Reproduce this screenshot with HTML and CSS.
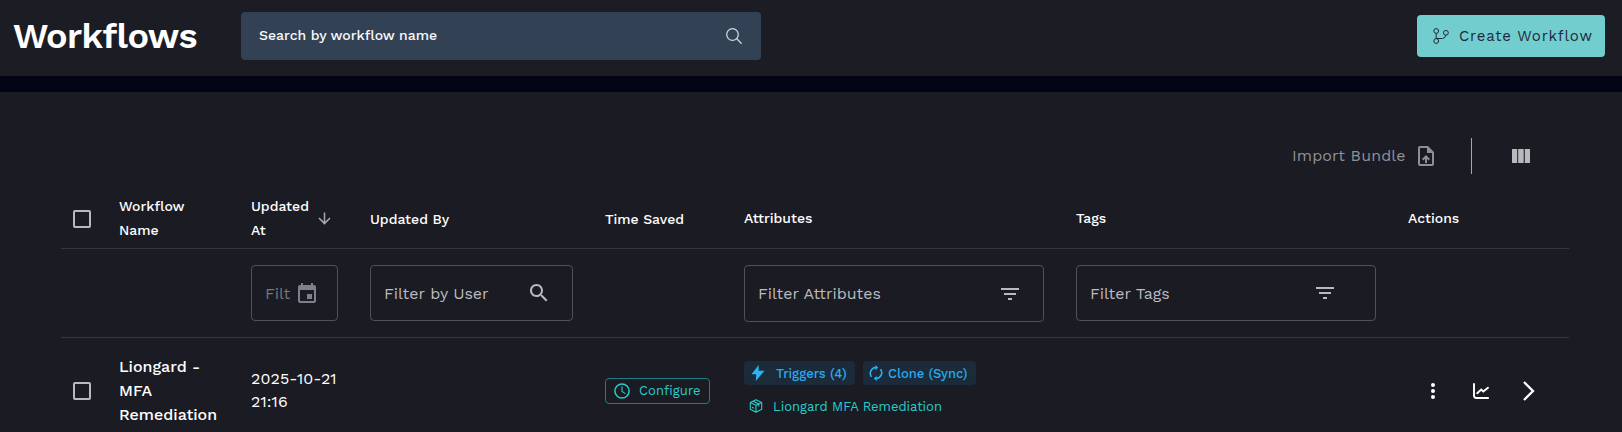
FILE: index.html
```
<!DOCTYPE html>
<html lang="en">
<head>
<meta charset="utf-8">
<title>Workflows</title>
<link rel="stylesheet" href="styles.css">
</head>
<body>
<header class="topbar">
  <h1 class="title">Workflows</h1>
  <div class="search">
    <span class="search-text">Search by workflow name</span>
    <svg class="search-icon" width="16" height="16" viewBox="0 0 16 16" fill="none" stroke="#cbd5e1" stroke-width="1.3" stroke-linecap="round"><circle cx="6.5" cy="6.5" r="5.8"/><path d="M10.8 10.8 15.2 15.2"/></svg>
  </div>
  <button class="create">
    <svg width="16" height="16" viewBox="0 0 16 16" fill="none" stroke="#1e293b" stroke-width="1"><circle cx="3.2" cy="3" r="2.4"/><circle cx="3.2" cy="13" r="2.4"/><circle cx="12.9" cy="4.8" r="2.4"/><path d="M3.2 5.4v5.2M3.2 10.5H9.5Q12.2 10.3 12.8 7.2"/></svg>
    <span class="create-text">Create Workflow</span>
  </button>
</header>
<main class="panel">
  <div class="toolbar">
    <div class="import"><span class="import-text">Import Bundle</span>
      <svg width="16" height="20" viewBox="0 0 16 20" fill="#8f8f95"><path fill-rule="evenodd" d="M2 0H10L16 6V18a2 2 0 0 1-2 2H2a2 2 0 0 1-2-2V2A2 2 0 0 1 2 0ZM2 2V18H14V7H9V2ZM4 13.01 5.41 14.42 7 12.84V17H9V12.84L10.59 14.43 12 13.01 8.01 9Z"/></svg>
    </div>
    <div class="divider"></div>
    <svg class="columns" width="18" height="14" viewBox="0 0 18 14" fill="#bababd"><path d="M0 0h5.2v14H0zM6.2 0h5.5v14H6.2zM12.8 0H18v14h-5.2z"/></svg>
  </div>
  <div class="table">
    <div class="row head">
      <div class="cell check"><span class="box"></span></div>
      <div class="cell"><span>Workflow<br>Name</span></div>
      <div class="cell sorted"><span>Updated<br>At</span>
        <svg width="13" height="13" viewBox="0 0 13 13" fill="none" stroke="#a9a9ad" stroke-width="1.5"><path d="M6.5 0.5V11.5M1 6 6.5 11.6 12 6"/></svg></div>
      <div class="cell low"><span>Updated By</span></div>
      <div class="cell low"><span>Time Saved</span></div>
      <div class="cell"><span>Attributes</span></div>
      <div class="cell"><span>Tags</span></div>
      <div class="cell"><span>Actions</span></div>
    </div>
    <div class="row filters">
      <div></div><div></div>
      <div class="field date"><span>Filt</span>
        <svg width="18" height="20" viewBox="0 0 18 20" fill="#7d808d"><path fill-rule="evenodd" d="M14 11H9v5h5ZM13 0V2H5V0H3V2H2A2 2 0 0 0 0 4V18a2 2 0 0 0 2 2H16a2 2 0 0 0 2-2V4a2 2 0 0 0-2-2H15V0ZM16 18H2V7H16Z"/></svg></div>
      <div class="field user"><span>Filter by User</span>
        <svg width="18" height="18" viewBox="3 3 18 18" fill="#bababd"><path d="M15.5 14h-.79l-.28-.27C15.41 12.59 16 11.11 16 9.5 16 5.91 13.09 3 9.5 3S3 5.91 3 9.5 5.91 16 9.5 16c1.61 0 3.09-.59 4.23-1.57l.27.28v.79l5 4.99L20.49 19zm-6 0C7.01 14 5 11.99 5 9.5S7.01 5 9.5 5 14 7.01 14 9.5 11.99 14 9.5 14"/></svg></div>
      <div></div>
      <div class="field attrs"><span>Filter Attributes</span>
        <svg width="18" height="12" viewBox="0 0 18 12" fill="#bababd"><path d="M7 12h4v-2H7zM0 0v2h18V0zM3 7h12V5H3z"/></svg></div>
      <div class="field tags"><span>Filter Tags</span>
        <svg width="18" height="12" viewBox="0 0 18 12" fill="#bababd"><path d="M7 12h4v-2H7zM0 0v2h18V0zM3 7h12V5H3z"/></svg></div>
      <div></div>
    </div>
    <div class="row body">
      <div class="cell check"><span class="box"></span></div>
      <div class="cell name"><span>Liongard -<br>MFA<br>Remediation</span></div>
      <div class="cell when"><span>2025-10-21<br>21:16</span></div>
      <div></div>
      <div class="cell"><button class="configure">
        <svg width="16" height="16" viewBox="0 0 16 16" fill="none" stroke="#28cccd" stroke-width="1.5"><circle cx="8" cy="8" r="7.1"/><path d="M8 3.5V8.4L11.4 10.6" stroke-width="1.1"/></svg>
        <span>Configure</span></button></div>
      <div class="attributes">
        <div class="chips">
          <span class="chip triggers"><svg width="14" height="16" viewBox="0 0 14 16" fill="#29b6f6"><path d="M7.6 0 .5 9.2H5.2L4.8 16 13.5 5.7H7.6Z"/></svg><span>Triggers (4)</span></span>
          <span class="chip clone"><svg width="14" height="16" viewBox="0 0 14 16" fill="none" stroke="#29b6f6" stroke-width="1.5"><path d="M2.5 11.8A5.7 5.7 0 0 1 6.8 2.6M11.5 4.2A5.7 5.7 0 0 1 7.2 13.4"/><path d="M6.4 0V5.2L9.1 2.6ZM7.6 10.8V16L4.9 13.4Z" fill="#29b6f6" stroke="none"/></svg><span>Clone (Sync)</span></span>
        </div>
        <div class="bundle"><svg width="14" height="14" viewBox="0 0 14 14" fill="none" stroke="#28cccd" stroke-width="1.1" stroke-linejoin="round"><path d="M7 .7 12.7 3.5V10.3L7 13.3 1.3 10.3V3.5ZM1.3 3.5 7 6.2 12.7 3.5M7 6.2V13.3M4 2.2 9.8 5V7.4M3 8.2l1.9 1"/></svg><span>Liongard MFA Remediation</span></div>
      </div>
      <div></div>
      <div class="cell actions">
        <svg width="4" height="16" viewBox="0 0 4 16" fill="#fff"><circle cx="2" cy="2" r="2"/><circle cx="2" cy="8" r="2"/><circle cx="2" cy="14" r="2"/></svg>
        <svg width="16" height="16" viewBox="0 0 16 16" fill="none" stroke="#fff" stroke-width="1.9" stroke-linecap="round"><path d="M1 1V12.5Q1 15 3.5 15H15.2M4.2 10.2 8.2 6.5 10.3 8.5 15 4.8"/></svg>
        <svg width="12" height="20" viewBox="0 0 12 20" fill="none" stroke="#fff" stroke-width="2.3"><path d="M1 1 10 10 1 19"/></svg>
      </div>
    </div>
  </div>
</main>
</body>
</html>
```
FILE: styles.css
```
* { box-sizing: border-box; }
body { margin: 0; height: 432px; overflow: hidden; background: #1b1b24; color: #fff; font-family: "Work Sans", Inter, sans-serif; }
svg { display: block; flex: none; }
button { font-family: inherit; margin: 0; }
span { white-space: nowrap; }

.topbar { display: flex; align-items: flex-start; height: 76px; background: #1c1c24; }
.title { width: 228px; margin: 14px 0 0 13px; font-size: 36px; line-height: 44px; font-weight: 600; letter-spacing: -0.65px; }
.search { display: flex; align-items: center; justify-content: space-between; width: 520px; height: 48px; margin-top: 12px; padding: 0 19px 0 18px; border-radius: 4px; background: #334155; }
.search-text { margin-bottom: 2px; font-size: 14px; font-weight: 500; color: #f8fafc; }
.create { display: flex; align-items: center; gap: 10px; width: 188px; height: 42px; margin: 15px 17px 0 auto; padding: 0 0 0 16px; border: 0; border-radius: 4px; background: #72cdce; color: #1e293b; }
.create-text { font-size: 15px; font-weight: 450; letter-spacing: 0.78px; }

.panel { border-top: 16px solid #000413; }
.toolbar { display: flex; align-items: center; height: 97px; padding: 31px 92px 0 1292px; }
.import { display: flex; align-items: center; justify-content: space-between; width: 142px; color: #8f8f95; }
.import-text { margin-bottom: 2px; font-size: 16px; letter-spacing: 0.12px; }
.divider { width: 1px; height: 36px; margin: 0 40px 0 37px; background: #a3a7b3; }

.table { margin: 0 53px 0 61px; }
.row { display: grid; grid-template-columns: 58px 132px 119px 235px 139px 332px 332px 161px; }
.cell { display: flex; align-items: center; }
.head { height: 60px; border-bottom: 1px solid #36363b; font-size: 14px; line-height: 24px; font-weight: 500; }
.head .cell > span:not(.box) { margin-bottom: 2px; }
.head .low { padding-top: 3px; }
.check { padding-left: 12px; }
.box { width: 18px; height: 18px; border: 2px solid #bababd; border-radius: 2px; }
.sorted svg { margin-left: 9px; }

.filters { height: 89px; padding-top: 16px; border-bottom: 1px solid #36363b; align-items: start; }
.field { display: flex; align-items: center; justify-content: space-between; height: 56px; padding-left: 13px; border: 1px solid #505057; border-radius: 4px; font-size: 16px; color: #bababd; }
.date { width: 87px; padding-right: 21px; color: #77777d; }
.user { width: 203px; padding-right: 24px; }
.attrs { width: 300px; height: 57px; padding-right: 24px; }
.tags { width: 300px; padding-right: 41px; }

.body { height: 105px; }
.name { font-size: 16px; line-height: 24px; font-weight: 500; }
.when { padding-bottom: 2px; font-size: 16px; line-height: 23px; font-weight: 400; letter-spacing: 0.1px; }
.configure { display: flex; align-items: center; gap: 9px; width: 105px; height: 26px; padding: 0 0 0 8px; border: 1px solid #1d7d82; border-radius: 4px; background: none; color: #28cccd; font-size: 13px; letter-spacing: 0.1px; }
.attributes { display: flex; flex-direction: column; padding-top: 23px; }
.chips { display: flex; gap: 8px; }
.chip { display: flex; align-items: center; height: 24px; border-radius: 4px; background: #1c2b39; color: #29a9f5; font-size: 13px; font-weight: 500; }
.triggers { width: 111px; padding-left: 7px; gap: 11px; }
.clone { width: 113px; padding-left: 6px; gap: 5px; }
.bundle { display: flex; align-items: center; gap: 10px; height: 20px; margin-top: 11px; padding-left: 5px; color: #28cccd; font-size: 13px; font-weight: 400; }
.actions { padding-left: 23px; }
.actions svg + svg { margin-left: 38px; }
.actions svg + svg + svg { margin-left: 34px; }
```
